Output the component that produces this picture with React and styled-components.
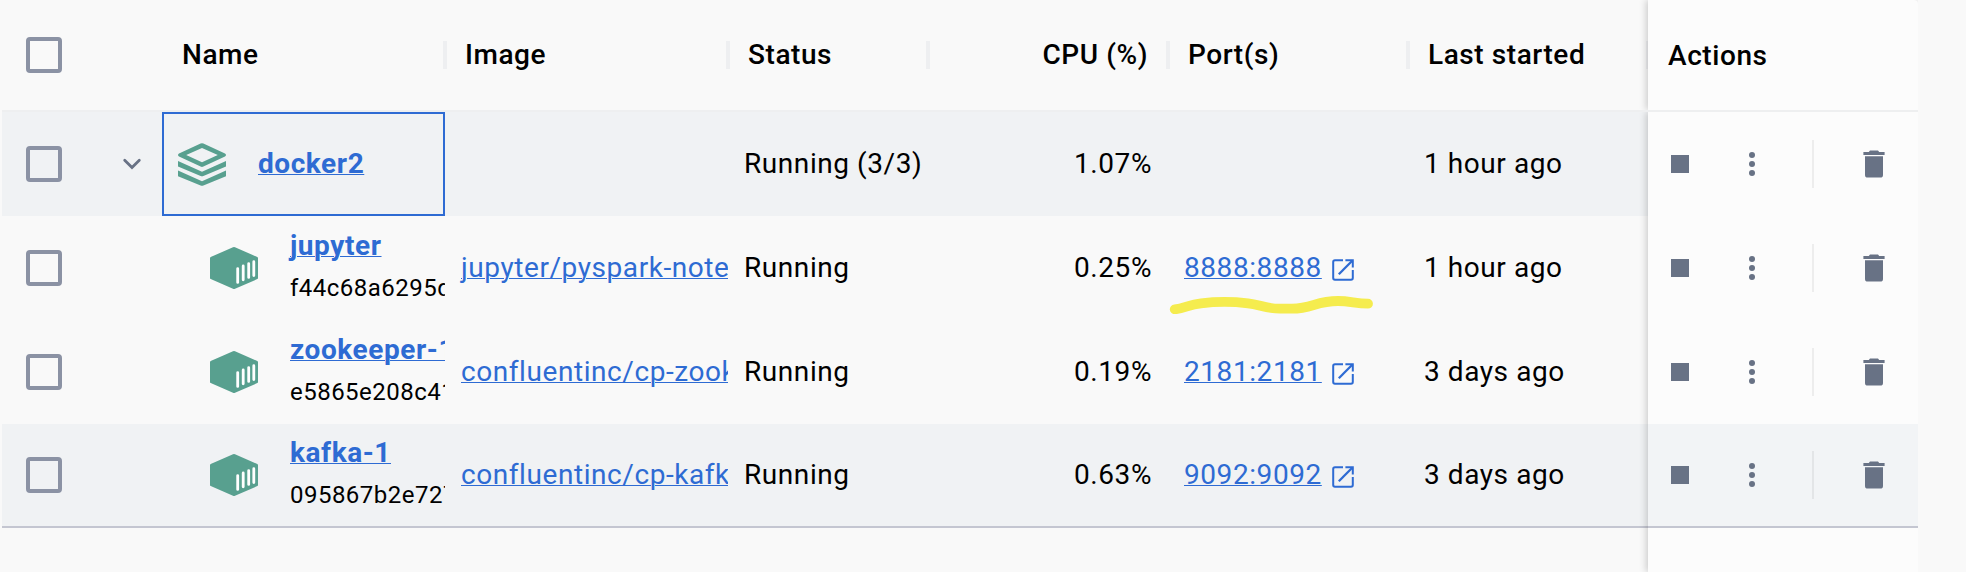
import React from "react";
import styled, { createGlobalStyle, css } from "styled-components";

const BLUE = "#2e6bd3";
const TEAL = "#58a08f";
const SLATE = "#687285";

const GlobalStyle = createGlobalStyle`
  * { box-sizing: border-box; }
  body {
    margin: 0;
    background: #f9f9f9;
    color: #000;
    font-family: Roboto, "Liberation Sans", sans-serif;
    font-size: 28px;
    line-height: 36px;
    letter-spacing: 0.57px;
    overflow: hidden;
  }
  svg { display: block; flex: none; }
`;

const Page = styled.div`
  width: 1966px;
  height: 572px;
  padding-left: 2px;
  display: flex;
  overflow: hidden;
`;

const Table = styled.div`
  width: 1646px;
  flex: none;
`;

const ActionsPane = styled.div`
  width: 270px;
  flex: none;
  display: flex;
  flex-direction: column;
`;

const columns = css`
  display: grid;
  grid-template-columns: 90px 70px 283px 283px 200px 240px 240px 240px;
`;

const HeaderRow = styled.div`
  ${columns}
  height: 112px;
  border-bottom: 2px solid #eeeff0;
`;

const HeaderCell = styled.div`
  display: flex;
  align-items: center;
  justify-content: ${(p) => (p.$right ? "flex-end" : "space-between")};
  padding-left: 20px;
  font-weight: 500;
  white-space: nowrap;
`;

const Separator = styled.span`
  width: 4px;
  height: 28px;
  margin-left: ${(p) => (p.$right ? "18px" : "0")};
  margin-right: -2px;
  background: #eeeff1;
`;

const Row = styled.div`
  ${columns}
  height: 104px;
  background: ${(p) => (p.$shaded ? "#f0f2f4" : "transparent")};
  border-bottom: ${(p) => (p.$last ? "2px solid #c4c6d1" : "0")};
`;

const Cell = styled.div`
  display: flex;
  align-items: center;
  justify-content: ${(p) => (p.$right ? "flex-end" : "flex-start")};
  padding: 0 ${(p) => (p.$right ? "16px" : "0")} 0 16px;
  min-width: 0;
  overflow: hidden;
  white-space: nowrap;
`;

const CheckCell = styled.div`
  display: flex;
  align-items: center;
  padding-left: 24px;
`;

const Checkbox = styled.span`
  width: 36px;
  height: 36px;
  border: 4px solid #8b92a4;
  border-radius: 4px;
`;

const ExpandCell = styled.div`
  display: flex;
  align-items: center;
  padding-left: 30px;
`;

const NameCell = styled(Cell)`
  gap: 32px;
  padding-left: ${(p) => (p.$nested ? "48px" : "14px")};
  border: ${(p) => (p.$focused ? `2px solid ${BLUE}` : "0")};
`;

const NameStack = styled.div`
  display: flex;
  flex-direction: column;
  gap: 6px;
  margin-bottom: ${(p) => (p.$nested ? "2px" : "0")};
`;

const Link = styled.a`
  color: ${BLUE};
  font-weight: ${(p) => (p.$bold ? 700 : 400)};
  text-decoration: underline;
  text-decoration-thickness: 1px;
  text-underline-offset: 1px;
`;

const ContainerId = styled.span`
  font-size: 24px;
  letter-spacing: 0.48px;
`;

const PortCell = styled(Cell)`
  gap: 10px;
  position: relative;
  overflow: visible;
`;

const Highlight = styled.svg`
  position: absolute;
  left: 0;
  top: 74px;
`;

const pane = css`
  background: #fcfcfc;
  box-shadow: -2px 0 7px rgba(0, 0, 0, 0.18);
  clip-path: inset(0 0 0 -12px);
`;

const ActionsHeader = styled.div`
  ${pane}
  height: 110px;
  display: flex;
  align-items: center;
  padding: 2px 0 0 20px;
  font-weight: 500;
  border-top-right-radius: 4px;
`;

const HeaderRule = styled.div`
  height: 2px;
  background: #eeeff0;
`;

const ActionsBody = styled.div`
  ${pane}
  flex: 1;
`;

const ActionRow = styled.div`
  height: 104px;
  display: grid;
  grid-template-columns: 64px 80px 50px 64px;
  align-items: center;
  justify-items: center;
  background: ${(p) => (p.$shaded ? "#f2f4f6" : "transparent")};
  border-bottom: ${(p) => (p.$last ? "2px solid #c4c6d1" : "0")};
`;

const StopSquare = styled.span`
  width: 18px;
  height: 18px;
  background: ${SLATE};
`;

const Divider = styled.span`
  width: 2px;
  height: 48px;
  justify-self: start;
  margin-left: 20px;
  background: rgba(0, 0, 0, 0.06);
`;

const Chevron = () => (
  <svg width="20" height="14" viewBox="0 0 20 14" fill="none" stroke={SLATE} strokeWidth="2.8" strokeLinecap="round">
    <path d="M2.7 3.2 10 10.5 17.3 3.2" />
  </svg>
);

const StackIcon = () => (
  <svg width="48" height="43" viewBox="0 0 48 43" fill={TEAL}>
    <path fillRule="evenodd" d="M22.6.5Q24-.2 25.4.5L47 10.4Q49 12 47 13.6L25.4 23.6Q24 24.3 22.6 23.6L1 13.6Q-1 12 1 10.4ZM24 5 8.2 12 24 19.2 39.8 12Z" />
    <path d="M0 18 24 28.8 48 18V23.6L25.4 33Q24 33.6 22.6 33L0 23.6Z" />
    <path d="M0 27.6 24 38.2 48 27.6V33.2L25.4 42.4Q24 43 22.6 42.4L0 33.2Z" />
  </svg>
);

const ContainerIcon = () => (
  <svg width="48" height="42" viewBox="0 0 48 42">
    <path fill={TEAL} d="M23 .3Q24-.1 25 .3L47.3 10Q48 10.4 48 11.2V31Q48 31.8 47.3 32.1L25 41.7Q24 42.1 23 41.7L.7 32.1Q0 31.8 0 31V11.2Q0 10.4.7 10Z" />
    <path stroke="#fff" strokeWidth="2.8" strokeLinecap="round" d="M27.7 21.6V35.4M33.2 19V32.8M38.7 16.6V30.4M43.8 14.7V28.5" />
  </svg>
);

const OpenSvg = styled.svg`
  margin-top: 4px;
`;

const OpenIcon = () => (
  <OpenSvg width="22" height="22" viewBox="0 0 22 22" fill="none" stroke={BLUE} strokeWidth="2">
    <path d="M11 1.2H3Q1.2 1.2 1.2 3V19Q1.2 20.8 3 20.8H19Q20.8 20.8 20.8 19V11" />
    <path d="M13.4 1.2H20.8V8.6" />
    <path strokeWidth="2.3" d="M20.5 1.5 6.8 15.2" />
  </OpenSvg>
);

const DotsIcon = () => (
  <svg width="6" height="24" viewBox="0 0 6 24" fill={SLATE}>
    <circle cx="3" cy="3" r="3" />
    <circle cx="3" cy="12" r="3" />
    <circle cx="3" cy="21" r="3" />
  </svg>
);

const TrashIcon = () => (
  <svg width="22" height="28" viewBox="0 0 22 28" fill={SLATE}>
    <path d="M.4 2H5.8L7 .5H15L16.2 2H21.6V5H.4ZM2 6.2H20V25Q20 27.6 17.2 27.6H4.8Q2 27.6 2 25Z" />
  </svg>
);

const Marker = () => (
  <Highlight width="212" height="24" viewBox="0 0 212 24" fill="none" stroke="#f5ec4e" strokeWidth="9.8" strokeLinecap="round" strokeLinejoin="round">
    <path d="M6.7 19.3C16 18.5 21 14.6 33 13.3C47 11.6 66 11.6 80 13.3C92 14.6 97 18.7 112 18.7H124C144 18.7 148 11 170 11C182 11 188 13.7 200 13.7" />
  </Highlight>
);

const HEADERS = [
  { label: "Name" },
  { label: "Image" },
  { label: "Status" },
  { label: "CPU (%)", right: true },
  { label: "Port(s)" },
  { label: "Last started" },
];

const ROWS = [
  { name: "docker2", group: true, status: "Running (3/3)", cpu: "1.07%", started: "1 hour ago", shaded: true },
  { name: "jupyter", id: "f44c68a6295d", image: "jupyter/pyspark-notebook", status: "Running", cpu: "0.25%", port: "8888:8888", started: "1 hour ago", marked: true },
  { name: "zookeeper-1", id: "e5865e208c41", image: "confluentinc/cp-zookeeper", status: "Running", cpu: "0.19%", port: "2181:2181", started: "3 days ago" },
  { name: "kafka-1", id: "095867b2e727", image: "confluentinc/cp-kafka", status: "Running", cpu: "0.63%", port: "9092:9092", started: "3 days ago", shaded: true, last: true },
];

export default function App() {
  return (
    <>
      <GlobalStyle />
      <Page>
        <Table>
          <HeaderRow>
            <CheckCell><Checkbox /></CheckCell>
            <span />
            {HEADERS.map((h) => (
              <HeaderCell key={h.label} $right={h.right}>
                {h.label}
                <Separator $right={h.right} />
              </HeaderCell>
            ))}
          </HeaderRow>
          {ROWS.map((r) => (
            <Row key={r.name} $shaded={r.shaded} $last={r.last}>
              <CheckCell><Checkbox /></CheckCell>
              <ExpandCell>{r.group && <Chevron />}</ExpandCell>
              <NameCell $nested={!r.group} $focused={r.group}>
                {r.group ? <StackIcon /> : <ContainerIcon />}
                <NameStack $nested={!r.group}>
                  <Link $bold>{r.name}</Link>
                  {r.id && <ContainerId>{r.id}</ContainerId>}
                </NameStack>
              </NameCell>
              <Cell>{r.image && <Link>{r.image}</Link>}</Cell>
              <Cell>{r.status}</Cell>
              <Cell $right>{r.cpu}</Cell>
              <PortCell>
                {r.port && <><Link>{r.port}</Link><OpenIcon /></>}
                {r.marked && <Marker />}
              </PortCell>
              <Cell>{r.started}</Cell>
            </Row>
          ))}
        </Table>
        <ActionsPane>
          <ActionsHeader>Actions</ActionsHeader>
          <HeaderRule />
          <ActionsBody>
            {ROWS.map((r) => (
              <ActionRow key={r.name} $shaded={r.last} $last={r.last}>
                <StopSquare />
                <DotsIcon />
                <Divider />
                <TrashIcon />
              </ActionRow>
            ))}
          </ActionsBody>
        </ActionsPane>
      </Page>
    </>
  );
}
